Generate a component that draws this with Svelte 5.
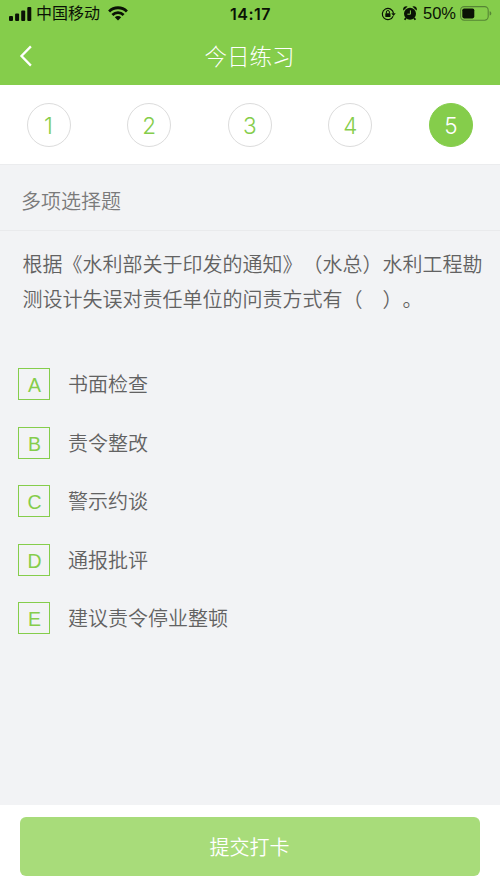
<script>
	const page_numbers = [1, 2, 3, 4, 5];

	const option_list = [
		{ key: 'A', text: '书面检查' },
		{ key: 'B', text: '责令整改' },
		{ key: 'C', text: '警示约谈' },
		{ key: 'D', text: '通报批评' },
		{ key: 'E', text: '建议责令停业整顿' }
	];

	let current = $state(5);
	let selected = $state([]);

	function toggle_option(key) {
		selected = selected.includes(key) ? selected.filter((k) => k !== key) : [...selected, key];
	}
</script>

<div class="screen">
	<header class="header">
		<div class="status">
			<div class="status_left">
				<svg class="signal" width="23" height="14" viewBox="0 0 23 14" aria-hidden="true">
					<rect x="0" y="9" width="4" height="5" rx="1" />
					<rect x="6.1" y="6.5" width="4" height="7.5" rx="1" />
					<rect x="12.2" y="3.5" width="4" height="10.5" rx="1" />
					<rect x="18.3" y="0" width="4" height="14" rx="1" />
				</svg>
				<span class="carrier">中国移动</span>
				<svg class="wifi" width="20" height="15" viewBox="0 0 20 15" aria-hidden="true">
					<g fill="none" stroke="#0a1205" stroke-width="2.8">
						<path d="M1.1 5.4a12.7 12.7 0 0 1 17.8 0" />
						<path d="M4.4 9a8 8 0 0 1 11.2 0" />
					</g>
					<path d="M6.8 11.3a4.6 4.6 0 0 1 6.4 0L10 14.5z" />
				</svg>
			</div>
			<span class="clock">14:17</span>
			<div class="status_right">
				<svg class="lock" width="15" height="14" viewBox="0 0 15 14" aria-hidden="true">
					<path d="M12.1 9.2A5.6 5.6 0 1 1 12.5 6.4" fill="none" stroke="#0a1205" stroke-width="1.2" />
					<path d="M10.3 6.2h4.4L12.5 9z" />
					<rect x="4.3" y="6.2" width="5.2" height="3.8" rx="0.6" />
					<path d="M5.4 6.5V5a1.5 1.5 0 0 1 3 0v1.5" fill="none" stroke="#0a1205" stroke-width="1" />
				</svg>
				<svg class="alarm" width="14" height="15" viewBox="0 0 14 15" aria-hidden="true">
					<circle cx="7" cy="7.8" r="6" />
					<path d="M0.5 4.6A3 3 0 0 1 4.6 0.6zM13.5 4.6A3 3 0 0 0 9.4 0.6z" />
					<path d="M3 12l-1.4 1.8M11 12l1.4 1.8" stroke="#0a1205" stroke-width="1.8" />
					<path d="M7.4 4.4v3.8H4.4" fill="none" stroke="#85cd4b" stroke-width="1" />
				</svg>
				<span class="percent">50%</span>
				<svg class="battery" width="32" height="15" viewBox="0 0 32 15" aria-hidden="true">
					<rect x="0.6" y="0.6" width="27.6" height="13.6" rx="3.6" fill="none" stroke="#568535" stroke-width="1.1" />
					<rect x="2.3" y="2.4" width="12" height="10" rx="1.8" />
					<path d="M29.6 5.2c2.3.6 2.3 3.8 0 4.4z" fill="#568535" />
				</svg>
			</div>
		</div>
		<div class="title_bar">
			<button type="button" class="back" aria-label="返回">
				<svg width="14" height="22" viewBox="0 0 14 22" aria-hidden="true">
					<path d="M11.9 1.4L2.5 11l9.4 9.6" fill="none" stroke="#fff" stroke-width="2.3" />
				</svg>
			</button>
			<h1 class="title">今日练习</h1>
		</div>
	</header>

	<nav class="pager">
		{#each page_numbers as num (num)}
			<button
				type="button"
				class="page_dot"
				class:active={num === current}
				onclick={() => (current = num)}
			>
				{num}
			</button>
		{/each}
	</nav>

	<h2 class="kind">多项选择题</h2>

	<main class="question">
		<p class="stem">根据《水利部关于印发的通知》（水总）水利工程勘测设计失误对责任单位的问责方式有（　）。</p>
		<div class="options">
			{#each option_list as option (option.key)}
				<button
					type="button"
					class="option"
					class:picked={selected.includes(option.key)}
					onclick={() => toggle_option(option.key)}
				>
					<span class="option_key">{option.key}</span>
					<span class="option_text">{option.text}</span>
				</button>
			{/each}
		</div>
	</main>

	<footer class="footer">
		<button type="button" class="submit">提交打卡</button>
	</footer>
</div>

<style>
	:global(body) {
		margin: 0;
	}

	.screen {
		display: flex;
		flex-direction: column;
		height: 889px;
		background: #f2f3f5;
		color: #626262;
		font-family: 'Noto Sans CJK SC', sans-serif;
		font-weight: 350;
		text-spacing-trim: space-all;
	}

	button {
		margin: 0;
		padding: 0;
		border: 0;
		background: none;
		color: inherit;
		font: inherit;
		cursor: pointer;
	}

	svg {
		display: block;
		fill: #0a1205;
	}

	.header {
		height: 85px;
		background: #85cd4b;
	}

	.status {
		display: grid;
		grid-template-columns: 1fr auto 1fr;
		align-items: center;
		height: 27px;
		padding: 0 8px 0 9px;
		color: #0a1205;
	}

	.status_left,
	.status_right {
		display: flex;
		align-items: center;
	}

	.status_right {
		justify-content: flex-end;
	}

	.carrier {
		margin: 0 8px 2px 4px;
		font-size: 16px;
		font-weight: 400;
		line-height: 25px;
	}

	.clock {
		font-family: Inter, sans-serif;
		font-size: 16px;
		font-weight: 600;
		letter-spacing: 0.5px;
	}

	.lock {
		margin-right: 7px;
	}

	.alarm {
		margin-right: 6px;
	}

	.percent {
		margin-right: 4px;
		font-family: 'Liberation Sans', sans-serif;
		font-size: 16.5px;
		font-weight: 400;
	}

	.title_bar {
		display: grid;
		grid-template-columns: 40px 1fr 40px;
		align-items: center;
		height: 57px;
	}

	.back {
		padding: 1px 0 0 19px;
	}

	.title {
		margin: 0;
		padding-right: 1px;
		color: #fff;
		font-size: 22.5px;
		font-weight: 300;
		line-height: 57px;
		text-align: center;
	}

	.pager {
		display: flex;
		justify-content: space-between;
		height: 79px;
		padding: 18px 27px 0 26.5px;
		box-sizing: border-box;
		background: #fff;
	}

	.page_dot {
		width: 44px;
		height: 44px;
		border: 1px solid #dcdcdc;
		border-radius: 50%;
		color: #85cd4b;
		font-family: Inter, sans-serif;
		font-size: 22.5px;
		font-weight: 350;
		line-height: 43px;
	}

	.page_dot.active {
		border-color: #85cd4b;
		background: #85cd4b;
		color: #fff;
	}

	.kind {
		height: 67px;
		margin: 0;
		padding: 3px 21px 0;
		box-sizing: border-box;
		border-top: 1px solid #ebecee;
		border-bottom: 1px solid #e9eaec;
		color: #7a7a7a;
		font-size: 20px;
		font-weight: 350;
		line-height: 65px;
	}

	.question {
		flex: 1;
		padding: 15px 15px 0 22.5px;
	}

	.stem {
		margin: 0;
		font-size: 20px;
		line-height: 35px;
	}

	.options {
		display: flex;
		flex-direction: column;
		gap: 26.6px;
		margin: 52px 0 0 -4.5px;
	}

	.option {
		display: flex;
		align-items: center;
		gap: 18px;
		height: 32px;
		text-align: left;
	}

	.option_key {
		width: 32px;
		height: 32px;
		padding-left: 1px;
		box-sizing: border-box;
		border: 1px solid #85cd4b;
		color: #85cd4b;
		font-family: 'Liberation Sans', sans-serif;
		font-size: 19.5px;
		line-height: 32px;
		text-align: center;
	}

	.option.picked .option_key {
		background: #85cd4b;
		color: #fff;
	}

	.option_text {
		font-size: 20px;
		line-height: 32px;
	}

	.footer {
		height: 84px;
		padding: 12px 20px 0;
		box-sizing: border-box;
		background: #fff;
	}

	.submit {
		width: 100%;
		height: 59px;
		padding-right: 1px;
		border-radius: 6px;
		background: #a8dc7a;
		color: #fff;
		font-size: 20px;
		line-height: 59px;
	}
</style>
